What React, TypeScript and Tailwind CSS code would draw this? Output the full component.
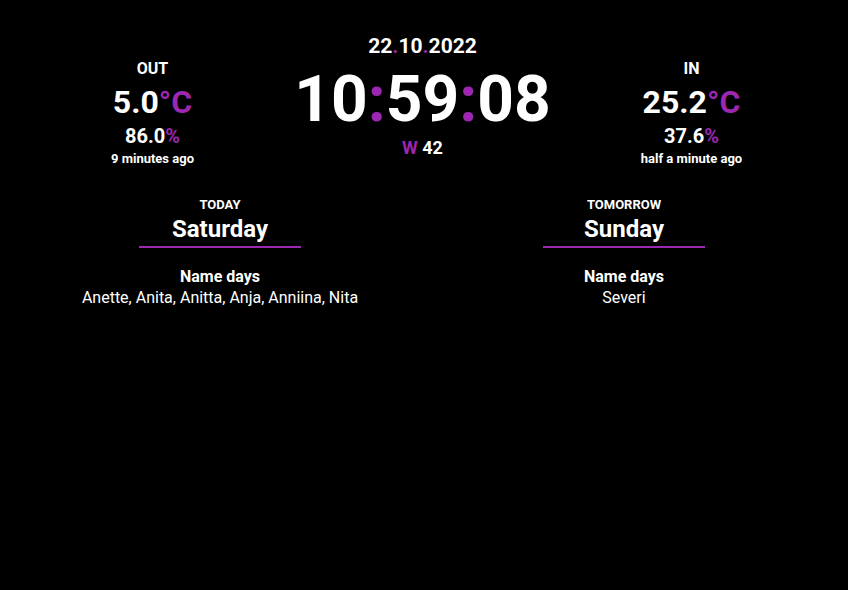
const PURPLE = "text-[#9c27b0]";

function Sensor({ label, temp, hum, ago }: { label: string; temp: string; hum: string; ago: string }) {
  return (
    <div className="flex flex-col items-center pt-[27px]">
      <div className="text-[16px] leading-[20px] font-bold">{label}</div>
      <div className="mt-[5px] text-[32px] leading-[36px] font-bold">
        {temp}
        <span className={PURPLE}>°C</span>
      </div>
      <div className="mt-[4px] text-[20px] leading-[24px] font-bold">
        {hum}
        <span className={PURPLE}>%</span>
      </div>
      <div className="mt-[3px] text-[13px] leading-[16px] font-bold">{ago}</div>
    </div>
  );
}

function Day({ label, day, names }: { label: string; day: string; names: string }) {
  return (
    <div className="flex flex-col items-center">
      <div className="text-[13px] leading-[16px] font-bold">{label}</div>
      <div className="w-[162px] border-b-2 border-[#9c27b0] pb-[1px] text-center text-[24px] leading-[32px] font-bold">
        {day}
      </div>
      <div className="mt-[18px] text-[16px] leading-[21px] font-bold">Name days</div>
      <div className="text-[16px] leading-[21px]">{names}</div>
    </div>
  );
}

export default function App() {
  return (
    <div className="min-h-[590px] w-[848px] bg-black text-white pt-[32px] font-['Roboto',sans-serif]">
      <div className="flex">
        <div className="w-[305px] shrink-0">
          <Sensor label="OUT" temp="5.0" hum="86.0" ago="9 minutes ago" />
        </div>
        <div className="flex min-w-0 flex-1 flex-col items-center pl-[5px]">
          <div className="text-[21px] leading-[28px] font-bold">
            22<span className={PURPLE}>.</span>10<span className={PURPLE}>.</span>2022
          </div>
          <div className="mt-[8px] text-[64px] leading-[64px] font-bold whitespace-nowrap">
            10<span className={PURPLE}>:</span>59<span className={PURPLE}>:</span>08
          </div>
          <div className="mt-[4px] text-[18px] leading-[24px] font-bold">
            <span className={PURPLE}>W</span> 42
          </div>
        </div>
        <div className="w-[313px] shrink-0">
          <Sensor label="IN" temp="25.2" hum="37.6" ago="half a minute ago" />
        </div>
      </div>
      <div className="mt-[30px] flex">
        <div className="w-[440px]">
          <Day label="TODAY" day="Saturday" names="Anette, Anita, Anitta, Anja, Anniina, Nita" />
        </div>
        <div className="w-[368px]">
          <Day label="TOMORROW" day="Sunday" names="Severi" />
        </div>
      </div>
    </div>
  );
}
